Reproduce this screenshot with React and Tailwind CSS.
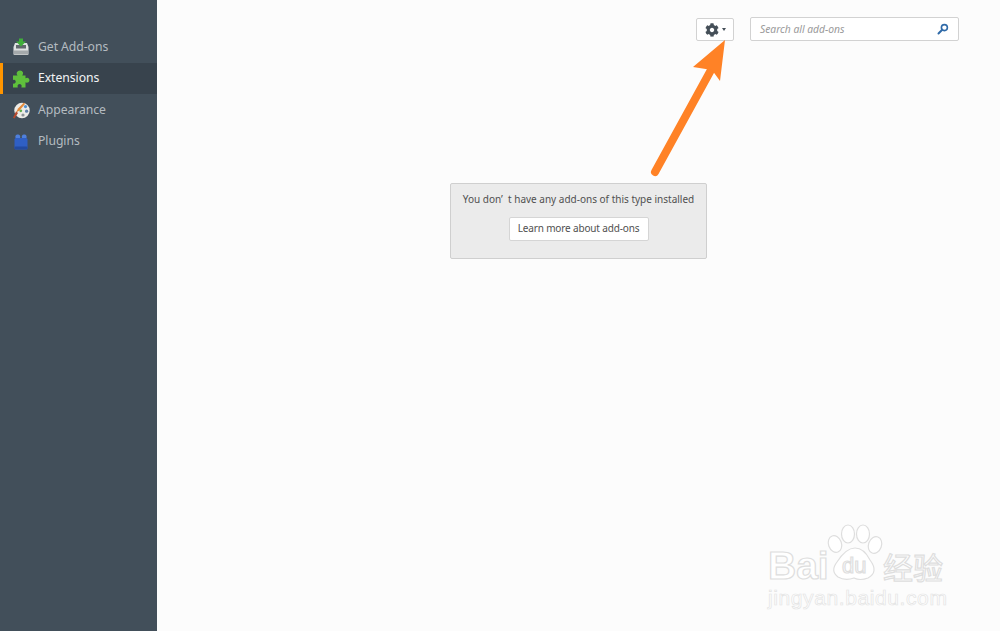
import { FaCog } from 'react-icons/fa'

function GetAddonsIcon() {
  return (
    <svg width="16" height="18" viewBox="0 0 16 18">
      <path d="M2 5 L14 5 L15.5 9 L15.5 16 Q15.5 17 14.5 17 L1.5 17 Q0.5 17 0.5 16 L0.5 9 Z" fill="#dfe1e1" />
      <rect x="1" y="12.5" width="14" height="4" fill="#a4a9ab" />
      <rect x="3" y="7" width="10" height="3.5" fill="#62696d" />
      <path d="M6 0.5 L10 0.5 L10 3.5 L13 3.5 L8 8.5 L3 3.5 L6 3.5 Z" fill="#3fae3a" />
    </svg>
  )
}

function PuzzleIcon() {
  return (
    <svg width="18" height="18" viewBox="0 0 18 18">
      <path d="M1 5.5 L5.5 5.5 Q4.2 4.2 4.8 2.6 Q5.6 0.6 8 0.6 Q10.4 0.6 11 2.6 Q11.4 4.2 10.2 5.5 L13.5 5.5 L13.5 8.2 Q15 7.2 16.2 8 Q17.8 9.2 17.4 11 Q16.8 12.8 14.8 12.7 Q14 12.6 13.5 12.2 L13.5 17.4 L9.4 17.4 Q10.2 15.6 9 14.6 Q7.6 13.6 6.2 14.6 Q5 15.6 5.8 17.4 L1 17.4 L1 13.6 Q2.8 14.2 3.6 12.6 Q4.2 11 3 10 Q2 9.4 1 10 Z" fill="#5fbf3c" />
    </svg>
  )
}

function PaletteIcon() {
  return (
    <svg width="18" height="17" viewBox="0 0 18 17">
      <ellipse cx="10" cy="8.5" rx="7.7" ry="7.8" fill="#ecebe6" />
      <circle cx="13.5" cy="4.6" r="1.6" fill="#4f8fd0" />
      <circle cx="14.6" cy="9.2" r="1.6" fill="#5e7fa8" />
      <circle cx="11" cy="13" r="1.6" fill="#8c9296" />
      <circle cx="8.8" cy="8.8" r="1.4" fill="#5fae4a" />
      <path d="M12 0.6 L6 6.5 L4 10.5 L7.5 8.6 L13 2 Z" fill="#e2893a" />
      <path d="M4 9.5 L1 15.8 L2.6 16.4 L6 11 Z" fill="#b5482c" />
    </svg>
  )
}

function PluginIcon() {
  return (
    <svg width="14" height="16" viewBox="0 0 14 16">
      <rect x="1.5" y="0.5" width="4.6" height="5" rx="1.8" fill="#4f80dc" />
      <rect x="7.9" y="0.5" width="4.6" height="5" rx="1.8" fill="#4f80dc" />
      <rect x="0.5" y="4" width="13" height="11.5" rx="1.5" fill="#2f5fc4" />
      <rect x="0.5" y="12.5" width="13" height="3" rx="1" fill="#234a9e" />
    </svg>
  )
}

function NavItem({ icon, label, active }) {
  return (
    <div className={`flex items-center odd:h-[32px] even:h-[31px] border-l-[3px] ${active ? 'border-[#ff9500] bg-[#38434d] text-[#f2f4f5]' : 'border-transparent text-[#b4bbc0]'}`}>
      <div className="w-[35px] flex justify-center pl-[1px]">{icon}</div>
      <span className="text-[12.2px] tracking-[-0.05px]">{label}</span>
    </div>
  )
}

const navItems = [
  { label: 'Get Add-ons', icon: <GetAddonsIcon /> },
  { label: 'Extensions', icon: <PuzzleIcon />, active: true },
  { label: 'Appearance', icon: <PaletteIcon /> },
  { label: 'Plugins', icon: <PluginIcon /> },
]

export default function App() {
  return (
    <div className="relative flex w-[1000px] h-[631px] overflow-hidden bg-[#fcfcfc] font-['Noto_Sans',sans-serif]">
      {/* sidebar */}
      <aside className="w-[157px] shrink-0 bg-[#424f5a] pt-[31px]">
        {navItems.map(n => (
          <NavItem key={n.label} {...n} />
        ))}
      </aside>

      <main className="flex-1 flex flex-col items-center">
        <div className="w-full flex justify-end items-start pt-[17px] pr-[41px] gap-[16px]">
          <button className="mt-[1px] w-[38px] h-[23px] flex items-center pl-[8px] gap-[3px] bg-white border border-[#d2d2d2] rounded-[2px]">
            <FaCog size={14} className="text-[#454f58]" />
            <span className="w-0 h-0 border-x-[2.5px] border-x-transparent border-t-[3px] border-t-[#454f58]" />
          </button>
          <div className="w-[209px] h-[24px] flex items-center justify-between pl-[9px] pr-[9px] bg-white border border-[#d2d2d2] rounded-[2px]">
            <span className="text-[10.3px] italic text-[#9a9a9a] pt-[1px]">Search all add-ons</span>
            <svg width="12" height="12" viewBox="0 0 12 12" fill="none">
              <circle cx="7.4" cy="4.6" r="3" stroke="#2f6aa8" strokeWidth="1.6" />
              <path d="M5.2 6.8 L1.5 10.5" stroke="#2f6aa8" strokeWidth="2" strokeLinecap="round" />
            </svg>
          </div>
        </div>

        <div className="mt-[142px] w-[257px] h-[76px] flex flex-col items-center pt-[8px] bg-[#ebebeb] border border-[#cfcfcf] rounded-[2px]">
          <p className="text-[10px] leading-[15px] text-[#505050]">You don’&nbsp;&nbsp;t have any add-ons of this type installed</p>
          <button className="mt-[10px] w-[140px] h-[24px] pb-[1px] bg-white border border-[#d5d5d5] rounded-[2px] text-[10px] tracking-[-0.15px] text-[#505050]">
            Learn more about add-ons
          </button>
        </div>
      </main>

      {/* arrow drawn on top of the screenshot */}
      <svg className="absolute left-[640px] top-[30px] pointer-events-none" width="100" height="150" viewBox="0 0 100 150">
        <path d="M15 142 L71 40" stroke="#ff8226" strokeWidth="8" strokeLinecap="round" />
        <path d="M85 10 L53 37 L72 40 L80 51 Z" fill="#ff8226" />
      </svg>

      {/* watermark */}
      <div className="absolute left-[767px] top-[522px] w-[200px] h-[90px] pointer-events-none text-white [-webkit-text-stroke:1.2px_#dedede]">
        <svg className="absolute left-[60px] top-[2px]" width="56" height="58" viewBox="0 0 56 58" fill="#fff" stroke="#dedede" strokeWidth="1.2">
          <ellipse cx="8" cy="20" rx="6.5" ry="8.5" transform="rotate(-20 8 20)" />
          <ellipse cx="21" cy="10" rx="6.5" ry="9" />
          <ellipse cx="36" cy="10" rx="6.5" ry="9" />
          <ellipse cx="48" cy="21" rx="6.5" ry="8.5" transform="rotate(20 48 21)" />
          <path d="M28 24 Q37 24 43 36 Q52 48 41 54 Q33 57 27 54 Q18 57 11 53 Q3 47 10 38 Q19 24 28 24 Z" />
        </svg>
        <span className="absolute left-[1px] top-[22px] text-[39px] leading-[44px] font-bold font-['Liberation_Sans',sans-serif]">Bai</span>
        <span className="absolute left-[75px] top-[31px] text-[22px] leading-[26px] font-['Liberation_Sans',sans-serif]">du</span>
        <span className="absolute left-[116px] top-[26px] text-[30px] leading-[36px] font-['Noto_Sans_CJK_SC',sans-serif]">经验</span>
        <span className="absolute left-[1px] top-[62px] text-[21px] leading-[28px] font-['Liberation_Sans',sans-serif] tracking-[0.6px] [-webkit-text-stroke:0.7px_#e4e4e4]">jingyan.baidu.com</span>
      </div>
    </div>
  )
}
